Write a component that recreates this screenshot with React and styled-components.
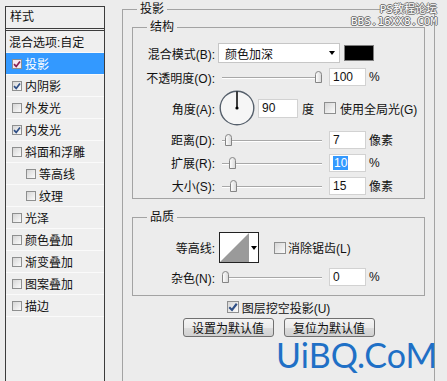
import React from "react";
import styled, { createGlobalStyle } from "styled-components";

const GlobalStyle = createGlobalStyle`
  html, body {
    margin: 0;
    padding: 0;
    background: #ececec;
  }
  body {
    font-family: "Liberation Sans", "Noto Sans CJK SC", sans-serif;
    font-size: 12px;
    color: #111;
  }
`;

const Dialog = styled.div`
  position: relative;
  display: flex;
  align-items: flex-start;
  width: 447px;
  height: 381px;
  overflow: hidden;
  background: #ececec;
`;

/* left list of layer styles */
const StylePanel = styled.div`
  box-sizing: border-box;
  flex-shrink: 0;
  width: 100px;
  height: 400px;
  margin: 6px 0 0 5px;
  border-left: 1px solid #3c3c3c;
  border-right: 1px solid #3c3c3c;
  background: #efefef;
`;

const PanelHead = styled.div`
  box-sizing: border-box;
  height: 25px;
  padding-left: 4px;
  line-height: 21px;
  border-top: 1px solid #3c3c3c;
  border-bottom: 3px double #3c3c3c;
`;

const LayerRow = styled.div`
  box-sizing: border-box;
  display: flex;
  align-items: center;
  gap: 3px;
  height: 22px;
  padding-left: ${(p) => p.$indent}px;
  border-bottom: 1px solid #fafafa;
  background: ${(p) => (p.$sel ? "#3399ff" : "transparent")};
  color: ${(p) => (p.$sel ? "#fff" : "#111")};
  white-space: nowrap;
`;

const Box = styled.span`
  box-sizing: border-box;
  flex-shrink: 0;
  display: inline-flex;
  align-items: center;
  justify-content: center;
  width: ${(p) => p.$size}px;
  height: ${(p) => p.$size}px;
  margin-left: ${(p) => p.$ml || 0}px;
  border: 1px solid #8e8f8f;
  background: ${(p) =>
    p.$sel ? "#f7e8ef" : "linear-gradient(135deg, #d6d6d6, #fbfbfb)"};
`;

function Check({ on, size = 10, ml, sel }) {
  return (
    <Box $size={size} $ml={ml} $sel={sel}>
      {on && (
        <svg width={size - 2} height={size - 2} viewBox="0 0 8 8">
          <path
            d="M1 4.2 L3.2 6.4 L7 1.4"
            fill="none"
            stroke={sel ? "#8a1f52" : "#2f4f86"}
            strokeWidth="1.7"
          />
        </svg>
      )}
    </Box>
  );
}

/* right settings area */
const Group = styled.fieldset`
  box-sizing: border-box;
  flex-shrink: 0;
  width: ${(p) => (p.$w ? `${p.$w}px` : "auto")};
  height: ${(p) => (p.$h ? `${p.$h}px` : "auto")};
  min-width: 0;
  margin: ${(p) => p.$m || "0"};
  padding: ${(p) => p.$pad};
  border: 1px solid #a3a3a3;
`;

const Legend = styled.legend`
  margin-left: ${(p) => p.$offset}px;
  padding: 0 3px;
  font-size: 12px;
  line-height: 16px;
`;

const Row = styled.div`
  display: flex;
  align-items: center;
  height: ${(p) => p.$h}px;
  margin-top: ${(p) => p.$mt || 0}px;
  justify-content: ${(p) => (p.$center ? "center" : "flex-start")};
  gap: ${(p) => p.$gap || 0}px;
  white-space: nowrap;
`;

const Label = styled.span`
  flex-shrink: 0;
  width: 82px;
  margin-right: 3px;
  text-align: right;
`;

const Select = styled.div`
  box-sizing: border-box;
  display: flex;
  align-items: center;
  justify-content: space-between;
  width: 122px;
  height: 20px;
  padding: 0 4px 0 6px;
  background: #fff;
  border: 1px solid #c6c6c6;
`;

const Caret = styled.span`
  width: 0;
  height: 0;
  border-left: 3.5px solid transparent;
  border-right: 3.5px solid transparent;
  border-top: 4px solid #000;
`;

const Swatch = styled.div`
  box-sizing: border-box;
  width: 30px;
  height: 16px;
  margin-left: 4px;
  background: #000;
  border: 1px solid #7d7d7d;
`;

const Track = styled.div`
  position: relative;
  flex-shrink: 0;
  width: 100px;
  height: 14px;
  margin-left: 4px;

  &::before {
    content: "";
    position: absolute;
    left: 0;
    right: 0;
    top: 7px;
    height: 1px;
    background: #a8a8a8;
    box-shadow: 0 1px 0 #fff;
  }
`;

const Thumb = styled.svg`
  position: absolute;
  top: 1px;
`;

function Slider({ value }) {
  return (
    <Track>
      <Thumb width="7" height="12" viewBox="0 0 7 12" style={{ left: value * 93 }}>
        <defs>
          <linearGradient id="tg" x1="0" x2="1">
            <stop offset="0" stopColor="#ffffff" />
            <stop offset="1" stopColor="#d8d8d8" />
          </linearGradient>
        </defs>
        <path
          d="M0.5 11.5 V3.5 Q0.5 0.5 3.5 0.5 Q6.5 0.5 6.5 3.5 V11.5 Z"
          fill="url(#tg)"
          stroke="#858585"
        />
      </Thumb>
    </Track>
  );
}

const Field = styled.div`
  box-sizing: border-box;
  flex-shrink: 0;
  display: flex;
  align-items: center;
  width: ${(p) => p.$w}px;
  height: ${(p) => p.$h || 18}px;
  margin-left: ${(p) => p.$ml}px;
  padding-left: 3px;
  background: #fff;
  border: 1px solid #d2d2d2;
`;

const Picked = styled.span`
  background: #3399ff;
  color: #fff;
  padding: 0 1px;
`;

const Unit = styled.span`
  margin-left: ${(p) => p.$ml || 3}px;
`;

const Picker = styled.div`
  box-sizing: border-box;
  display: flex;
  width: 40px;
  height: 31px;
  margin-left: 1px;
  border: 1px solid #222;
  background: #fff;
`;

const PickerArrow = styled.div`
  display: flex;
  align-items: center;
  justify-content: center;
  width: 9px;
`;

const Button = styled.button`
  box-sizing: border-box;
  width: 91px;
  height: 19px;
  padding: 0;
  border: 1px solid #707070;
  border-radius: 3px;
  background: linear-gradient(#f4f4f4, #ebebeb 50%, #dddddd 51%, #d0d0d0);
  font: 12px "Liberation Sans", "Noto Sans CJK SC", sans-serif;
  color: #111;
`;

const Mark = styled.div`
  margin: 1px -12px 0 0;
  text-align: right;
  font: 34px/34px Lato, "Open Sans", sans-serif;
  color: #1f70c6;
`;

const Stamp = styled.div`
  position: absolute;
  top: 4px;
  right: 10px;
  text-align: right;
  font: 11px/12px "DejaVu Sans Mono", "Noto Sans CJK SC", monospace;
  color: #fff;
  text-shadow: 1px 0 #707070, -1px 0 #707070, 0 1px #707070, 0 -1px #707070;
`;

const layers = [
  { name: "投影", on: true, sel: true },
  { name: "内阴影", on: true },
  { name: "外发光" },
  { name: "内发光", on: true },
  { name: "斜面和浮雕" },
  { name: "等高线", sub: true },
  { name: "纹理", sub: true },
  { name: "光泽" },
  { name: "颜色叠加" },
  { name: "渐变叠加" },
  { name: "图案叠加" },
  { name: "描边" },
];

const sliders = [
  { label: "距离(D):", value: 0.03, num: "7", unit: "像素" },
  { label: "扩展(R):", value: 0.07, num: "10", unit: "%", picked: true },
  { label: "大小(S):", value: 0.09, num: "15", unit: "像素" },
];

export default function App() {
  return (
    <Dialog>
      <GlobalStyle />

      <StylePanel>
        <PanelHead>样式</PanelHead>
        <LayerRow $indent={3}>混合选项:自定</LayerRow>
        {layers.map((l) => (
          <LayerRow key={l.name} $indent={l.sub ? 20 : 6} $sel={l.sel}>
            <Check on={l.on} sel={l.sel} />
            {l.name}
          </LayerRow>
        ))}
      </StylePanel>

      <Group $w={313} $h={420} $m="1px 0 0 17px" $pad="2px 9px 0 9px">
        <Legend $offset={5}>投影</Legend>

        <Group $pad="8px 0 1px 0">
          <Legend $offset={14}>结构</Legend>
          <Row $h={20}>
            <Label>混合模式(B):</Label>
            <Select>
              颜色加深
              <Caret />
            </Select>
            <Swatch />
          </Row>
          <Row $h={18} $mt={5}>
            <Label>不透明度(O):</Label>
            <Slider value={1} />
            <Field $w={37} $ml={7}>100</Field>
            <Unit>%</Unit>
          </Row>
          <Row $h={36} $mt={4}>
            <Label>角度(A):</Label>
            <svg width="36" height="36" viewBox="0 0 36 36" style={{ marginLeft: 1 }}>
              <circle cx="18" cy="18" r="16.8" fill="#f6f6f6" stroke="#56606c" strokeWidth="1.4" />
              <line x1="18" y1="18" x2="18" y2="1.5" stroke="#000" strokeWidth="1.5" />
              <circle cx="18" cy="18" r="1.6" fill="#000" />
            </svg>
            <Field $w={40} $h={19} $ml={3}>90</Field>
            <Unit $ml={4}>度</Unit>
            <Check size={12} ml={10} />
            <Unit $ml={4}>使用全局光(G)</Unit>
          </Row>
          <div style={{ height: 2 }} />
          {sliders.map((s) => (
            <Row $h={23} key={s.label}>
              <Label>{s.label}</Label>
              <Slider value={s.value} />
              <Field $w={37} $ml={7}>
                {s.picked ? <Picked>{s.num}</Picked> : s.num}
              </Field>
              <Unit>{s.unit}</Unit>
            </Row>
          ))}
        </Group>

        <Group $m="10px 0 0 0" $pad="7px 0 9px 0">
          <Legend $offset={14}>品质</Legend>
          <Row $h={31}>
            <Label>等高线:</Label>
            <Picker>
              <svg width="29" height="29" viewBox="0 0 29 29">
                <polygon points="0,29 29,0 29,29" fill="#9a9a9a" />
              </svg>
              <PickerArrow>
                <Caret />
              </PickerArrow>
            </Picker>
            <Check size={12} ml={15} />
            <Unit $ml={2}>消除锯齿(L)</Unit>
          </Row>
          <Row $h={18} $mt={5}>
            <Label>杂色(N):</Label>
            <Slider value={0} />
            <Field $w={37} $ml={7}>0</Field>
            <Unit>%</Unit>
          </Row>
        </Group>

        <Row $h={14} $mt={4} $center $gap={3}>
          <Check on size={12} />
          图层挖空投影(U)
        </Row>
        <Row $h={19} $mt={4} $center $gap={10}>
          <Button>设置为默认值</Button>
          <Button>复位为默认值</Button>
        </Row>
        <Mark>UiBQ.CoM</Mark>
      </Group>

      <Stamp>
        PS教程论坛
        <br />
        BBS.16XX8.COM
      </Stamp>
    </Dialog>
  );
}
